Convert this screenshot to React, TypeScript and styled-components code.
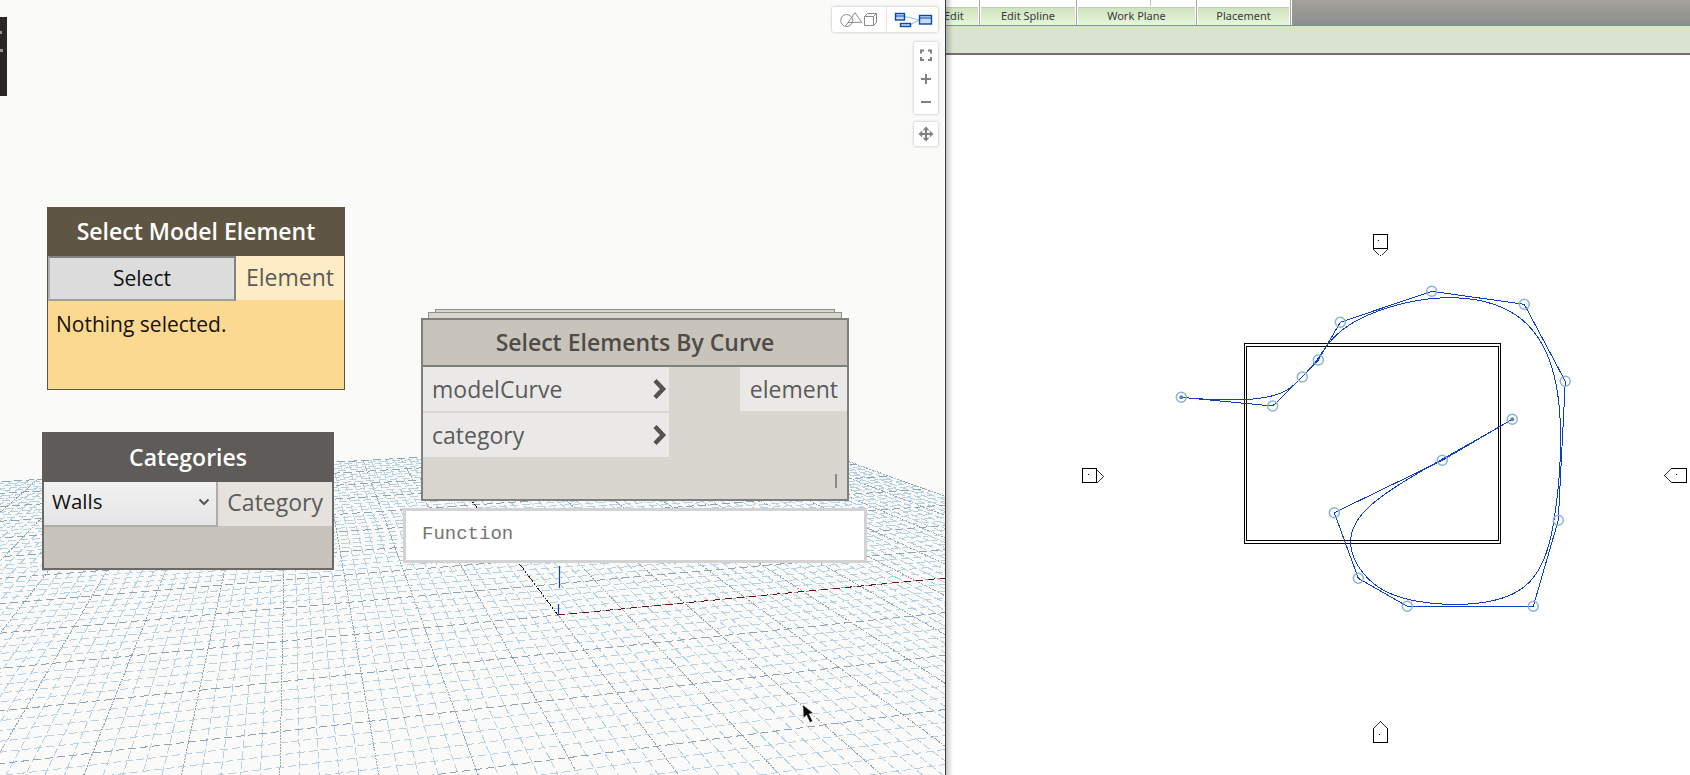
import React from "react";
import styled, { createGlobalStyle } from "styled-components";

const GlobalStyle = createGlobalStyle`
  html, body {
    margin: 0;
    padding: 0;
    width: 1690px;
    height: 775px;
    overflow: hidden;
    background: #fff;
    font-family: "Open Sans", "Liberation Sans", sans-serif;
  }
`;

const Page = styled.div`
  display: flex;
  width: 1690px;
  height: 775px;
  overflow: hidden;
`;

/* ---------- Dynamo side ---------- */

const Workspace = styled.div`
  position: relative;
  flex: 0 0 945px;
  height: 775px;
  background: #fafaf8;
  overflow: hidden;
`;

const FullSvg = styled.svg`
  position: absolute;
  top: 0;
  left: 0;
  display: block;
`;

const LibraryStub = styled.div`
  position: absolute;
  top: 17px;
  left: 0;
  width: 7px;
  height: 79px;
  background: #2b2624;
`;

const StubMark = styled.span<{ $top: number; $w: number }>`
  display: block;
  position: absolute;
  left: 0;
  top: ${(p) => p.$top}px;
  width: ${(p) => p.$w}px;
  height: 3px;
  background: #9a9590;
`;

const NodeBox = styled.div<{
  $x: number;
  $y: number;
  $w: number;
  $h: number;
  $border: string;
  $bg: string;
  $bw: number;
}>`
  position: absolute;
  left: ${(p) => p.$x}px;
  top: ${(p) => p.$y}px;
  width: ${(p) => p.$w}px;
  height: ${(p) => p.$h}px;
  box-sizing: border-box;
  border: ${(p) => p.$bw}px solid ${(p) => p.$border};
  background: ${(p) => p.$bg};
  display: flex;
  flex-direction: column;
`;

const NodeHeader = styled.div<{ $bg: string; $h: number; $bw: number }>`
  flex: 0 0 ${(p) => p.$h}px;
  margin: -${(p) => p.$bw}px -${(p) => p.$bw}px 0;
  background: ${(p) => p.$bg};
  color: #fff;
  font-size: 23px;
  font-weight: 600;
  line-height: ${(p) => p.$h + 2}px;
  text-align: center;
  white-space: nowrap;
`;

const FlatHeader = styled.div`
  flex: 0 0 45px;
  box-sizing: border-box;
  background: #c8c3bb;
  border-bottom: 2px solid #7f7f7b;
  color: #4f4b47;
  font-size: 23px;
  font-weight: 600;
  line-height: 45px;
  text-align: center;
  white-space: nowrap;
`;

const NodeRow = styled.div`
  display: flex;
  justify-content: space-between;
`;

const SelectButton = styled.div`
  box-sizing: border-box;
  width: 188px;
  height: 45px;
  background: #dcdcdc;
  border: 2px solid #828282;
  border-left-color: #b0b0b0;
  border-bottom-color: #a0a0a0;
  color: #111;
  font-size: 21px;
  line-height: 41px;
  text-align: center;
`;

const OutPort = styled.div<{ $bg: string; $w: number; $lh: number; $pad: number }>`
  box-sizing: border-box;
  width: ${(p) => p.$w}px;
  height: 44px;
  background: ${(p) => p.$bg};
  color: #5b5b5b;
  font-size: 23px;
  line-height: ${(p) => p.$lh}px;
  padding-right: ${(p) => p.$pad}px;
  text-align: right;
  white-space: nowrap;
`;

const Message = styled.div`
  padding: 10px 0 0 8px;
  font-size: 21px;
  line-height: 27px;
  color: #1a1208;
`;

const Combo = styled.div`
  position: relative;
  box-sizing: border-box;
  width: 175px;
  height: 45px;
  padding-left: 8px;
  background: linear-gradient(#f2f2f2, #e4e4e4);
  border-right: 2px solid #acaca8;
  border-bottom: 2px solid #acaca8;
  color: #111;
  font-size: 20.5px;
  line-height: 39px;
`;

const ComboArrow = styled.svg`
  position: absolute;
  top: 16px;
  left: 154px;
`;

const Stack = styled.div<{ $x: number; $y: number; $w: number; $h: number }>`
  position: absolute;
  left: ${(p) => p.$x}px;
  top: ${(p) => p.$y}px;
  width: ${(p) => p.$w}px;
  height: ${(p) => p.$h}px;
  box-sizing: border-box;
  border: 1px solid #8f8f8b;
  background: #d9d6d0;
`;

const PortsGrid = styled.div`
  flex: 1;
  position: relative;
  display: flex;
  justify-content: space-between;
`;

const InPorts = styled.div`
  display: flex;
  flex-direction: column;
  gap: 2px;
`;

const InPort = styled.div`
  display: flex;
  align-items: center;
  justify-content: space-between;
  box-sizing: border-box;
  width: 246px;
  height: 44px;
  padding: 0 2px 0 9px;
  background: #eae9e7;
  color: #5b5b5b;
  font-size: 23px;
`;

const ResizeMark = styled.div`
  position: absolute;
  right: 10px;
  bottom: 11px;
  width: 2px;
  height: 14px;
  background: #8a8a88;
`;

const Preview = styled.div`
  position: absolute;
  left: 403px;
  top: 508px;
  box-sizing: border-box;
  width: 464px;
  height: 55px;
  padding-left: 16px;
  background: #fff;
  border: 3px solid #d3d3d3;
  color: #757575;
  font-family: "Liberation Mono", "DejaVu Sans Mono", monospace;
  font-size: 19px;
  line-height: 46px;
`;

const ToolCard = styled.div<{ $x: number; $y: number; $w: number; $h: number }>`
  position: absolute;
  left: ${(p) => p.$x}px;
  top: ${(p) => p.$y}px;
  width: ${(p) => p.$w}px;
  height: ${(p) => p.$h}px;
  background: #fff;
  border-radius: 2px;
  box-shadow: 0 0 3px rgba(0, 0, 0, 0.28);
`;

/* ---------- Revit side ---------- */

const RevitPane = styled.div`
  flex: 1;
  display: flex;
  flex-direction: column;
  position: relative;
  border-left: 1px solid #3a3a3a;
  min-width: 0;
`;

const PaneShadow = styled.div`
  position: absolute;
  top: 0;
  bottom: 0;
  left: 0;
  width: 7px;
  background: linear-gradient(to right, rgba(0, 0, 0, 0.22), rgba(0, 0, 0, 0));
`;

const Ribbon = styled.div`
  display: flex;
  flex: 0 0 25px;
  background: linear-gradient(#a2a29a, #8e8e8b);
  border-bottom: 1px solid #69ad45;
`;

const RibbonPanel = styled.div<{ $w: number }>`
  flex: 0 0 ${(p) => p.$w}px;
  box-sizing: border-box;
  display: flex;
  flex-direction: column;
  justify-content: flex-end;
  background: #fff;
  border-right: 1px solid #fff;
  box-shadow: inset -1px 0 0 #a8a8a8;
  padding-right: 2px;
`;

const RibbonTick = styled.div<{ $left: number }>`
  flex: 0 0 6px;
  width: 1px;
  margin: 0 0 1px ${(p) => p.$left}px;
  background: #c8c8c8;
`;

const RibbonLabel = styled.div`
  height: 18px;
  box-sizing: border-box;
  background: linear-gradient(#cfe2bf, #e8f6da);
  border-top: 1px solid #bcd0ac;
  color: #3a3a3a;
  font-family: "Noto Sans", "Liberation Sans", sans-serif;
  font-size: 11px;
  line-height: 16px;
  text-align: center;
  white-space: nowrap;
  overflow: hidden;
`;

const EditLabel = styled(RibbonLabel)`
  text-indent: -2px;
  text-align: left;
`;

const OptionsBar = styled.div`
  flex: 0 0 27px;
  background: #d9e3d0;
  border-bottom: 2px solid #6f6f6f;
`;

const Viewport = styled.div`
  flex: 1;
  background: #fff;
`;

const CanvasSvg = styled.svg`
  display: block;
`;

/* ---------- drawings ---------- */

const VP_A = { x: 290, y: 260 };
const VP_B = { x: 5000, y: 190 };
const ORIGIN = { x: 558, y: 615 };
const S_STEP = 0.0146;
const T_STEP = 0.09;

const project = (s: number, t: number) => {
  const d = s + t + 1;
  return {
    x: (s * VP_B.x + t * VP_A.x + ORIGIN.x) / d,
    y: (s * VP_B.y + t * VP_A.y + ORIGIN.y) / d,
  };
};

const GroundGrid = () => {
  const sMin = -15;
  const sMax = 10;
  const tMin = -8;
  const tMax = 9;
  const lines: React.ReactElement[] = [];

  for (let i = sMin * 5; i <= sMax * 5; i++) {
    const s = (i / 5) * S_STEP;
    const a = project(s, tMax * T_STEP);
    const b = project(s, tMin * T_STEP);
    const major = i % 5 === 0;
    lines.push(
      <line
        key={`a${i}`}
        x1={a.x}
        y1={a.y}
        x2={b.x}
        y2={b.y}
        stroke={major ? "#8fa4b4" : "#b6d0e4"}
        strokeDasharray={major ? "2 1" : "8 3"}
      />
    );
  }
  for (let j = tMin * 5; j <= tMax * 5; j++) {
    const t = (j / 5) * T_STEP;
    const a = project(sMin * S_STEP, t);
    const b = project(sMax * S_STEP, t);
    const major = j % 5 === 0;
    lines.push(
      <line
        key={`b${j}`}
        x1={a.x}
        y1={a.y}
        x2={b.x}
        y2={b.y}
        stroke={major ? "#8fa4b4" : "#b6d0e4"}
        strokeDasharray="8 4"
      />
    );
  }

  const farAxis = project(0, tMax * T_STEP);
  const redEnd = project(sMax * S_STEP, 0);

  return (
    <FullSvg width={945} height={775} viewBox="0 0 945 775">
      <g shapeRendering="crispEdges" strokeWidth={1}>
        {lines}
        <line
          x1={farAxis.x}
          y1={farAxis.y}
          x2={ORIGIN.x}
          y2={ORIGIN.y}
          stroke="#1c1c1c"
          strokeDasharray="2 1"
        />
        <line
          x1={ORIGIN.x}
          y1={ORIGIN.y}
          x2={redEnd.x}
          y2={redEnd.y}
          stroke="#6b0f0f"
          strokeDasharray="7 5"
        />
      </g>
      <path d="M559.5 566V588M558.5 604V615" stroke="#0b3fc4" strokeWidth={1.2} fill="none" />
      <path
        d="M803 705L803.5 718L806.5 715L810 722.5L812.5 721L809 714L813 713Z"
        fill="#0a0a0a"
        stroke="rgba(255,255,255,0.6)"
        strokeWidth={0.5}
      />
    </FullSvg>
  );
};

const PortChevron = () => (
  <svg width={15} height={22} viewBox="0 0 15 22">
    <path d="M3 2.5L11 11L3 19.5" fill="none" stroke="#55534f" strokeWidth={4.5} />
  </svg>
);

const WorkspaceTools = () => (
  <FullSvg width={945} height={775} viewBox="0 0 945 775">
    <line x1={886.5} y1={7} x2={886.5} y2={32} stroke="#e2e2e2" />
    <g fill="none" stroke="#8a8a8a" strokeWidth={1}>
      <circle cx={846.7} cy={20.5} r={6} />
      <path d="M855 12.7L861.7 22.3L848 22.5M855 12.7L845.5 26" />
      <path d="M864.5 16.5H873.5V25.5H864.5ZM864.5 16.5L867.5 13.5H876.5V22.5L873.5 25.5M873.5 16.5L876.5 13.5" />
    </g>
    <path d="M904.7 16.5L919.3 20M910.7 24.5L919.3 20" stroke="#9cc4e0" strokeWidth={1.2} fill="none" />
    <g fill="#c4dcec" stroke="#0a45b5" strokeWidth={1.4}>
      <rect x={895.5} y={13.5} width={9} height={6.5} />
      <rect x={919.5} y={15.5} width={12} height={8.5} />
      <rect x={900.5} y={23.5} width={10} height={3} />
    </g>
    <path d="M895.5 16H904.5M919.5 18H931.5" stroke="#0a45b5" strokeWidth={1} fill="none" />
    <g fill="none" stroke="#808080" strokeWidth={2}>
      <path d="M921 53.5V50.5H924M928 50.5H931V53.5M931 57V60H928M924 60H921V57" />
      <path d="M921 79H931M926 74V84M921 102H931" />
      <path d="M926 129V139M921 134H931" />
    </g>
    <path
      d="M926 126.5L929.4 130.2H922.6ZM926 141.5L929.4 137.8H922.6ZM918.5 134L922.2 130.6V137.4ZM933.5 134L929.8 130.6V137.4Z"
      fill="#808080"
    />
  </FullSvg>
);

const CONTROL_POINTS = [
  [1181.3, 397.3],
  [1272.7, 406],
  [1302.3, 377],
  [1318.3, 360],
  [1340.3, 322.3],
  [1431.7, 291.3],
  [1524.3, 304.3],
  [1565.3, 381.3],
  [1558.3, 520.3],
  [1533.3, 606.3],
  [1407.3, 606.3],
  [1358.3, 578.3],
  [1334.3, 512.7],
  [1442.3, 460.3],
  [1512.3, 419.3],
];

// clamped cubic b-spline over the control points, sampled to a polyline
const splinePoints = (pts: number[][]) => {
  const n = pts.length - 1;
  const spans = n - 2;
  const knots = [0, 0, 0];
  for (let k = 0; k <= spans; k++) knots.push(k);
  knots.push(spans, spans, spans);

  const basis = (i: number, p: number, u: number): number => {
    if (p === 0) return u >= knots[i] && u < knots[i + 1] ? 1 : 0;
    const a = knots[i + p] - knots[i];
    const b = knots[i + p + 1] - knots[i + 1];
    const left = a > 0 ? ((u - knots[i]) / a) * basis(i, p - 1, u) : 0;
    const right = b > 0 ? ((knots[i + p + 1] - u) / b) * basis(i + 1, p - 1, u) : 0;
    return left + right;
  };

  const out: string[] = [];
  const steps = spans * 24;
  for (let q = 0; q < steps; q++) {
    const u = (q / steps) * spans;
    let x = 0;
    let y = 0;
    pts.forEach((pt, i) => {
      const w = basis(i, 3, u);
      x += pt[0] * w;
      y += pt[1] * w;
    });
    out.push(`${x.toFixed(2)},${y.toFixed(2)}`);
  }
  out.push(pts[n].join(","));
  return out.join(" ");
};

const ElevationTag = ({ body, tip, dot }: { body: string; tip: string; dot: number[] }) => (
  <g shapeRendering="crispEdges">
    <path d={body} fill="#fff" stroke="#000" strokeWidth={1} />
    <path d={tip} fill="#fff" stroke="#000" strokeWidth={0.8} />
    <rect x={dot[0]} y={dot[1]} width={1} height={1} fill="#000" />
  </g>
);

const RevitCanvas = () => (
  <CanvasSvg width={744} height={720} viewBox="946 55 744 720">
    <g fill="none" stroke="#000" strokeWidth={1} shapeRendering="crispEdges">
      <rect x={1244.5} y={343.5} width={256} height={200} />
      <rect x={1246.5} y={346.5} width={252} height={194} />
    </g>
    <g fill="none" stroke="#0b3fc4" strokeWidth={1} shapeRendering="crispEdges">
      <polyline points={CONTROL_POINTS.map((p) => p.join(",")).join(" ")} />
      <polyline points={splinePoints(CONTROL_POINTS)} />
    </g>
    {CONTROL_POINTS.map((p) => (
      <circle key={p.join()} cx={p[0]} cy={p[1]} r={5} fill="none" stroke="#8ab3d8" strokeWidth={1.5} />
    ))}
    <circle cx={1181.3} cy={397.3} r={2} fill="#5c85b5" />
    <circle cx={1512.3} cy={419.3} r={2} fill="#5c85b5" />
    <ElevationTag body="M1373.5 234.5H1387.5V248.5H1373.5Z" tip="M1373.5 248.5L1380.5 256L1387.5 248.5" dot={[1378, 240]} />
    <ElevationTag body="M1373.5 728.5H1387.5V742.5H1373.5Z" tip="M1373.5 728.5L1380.5 721L1387.5 728.5" dot={[1379, 734]} />
    <ElevationTag body="M1082.5 468.5H1096.5V482.5H1082.5Z" tip="M1096.5 468.5L1103.5 475.5L1096.5 482.5" dot={[1088, 474]} />
    <ElevationTag body="M1671.5 468.5H1686.5V482.5H1671.5Z" tip="M1671.5 468.5L1664 475.5L1671.5 482.5" dot={[1676, 474]} />
  </CanvasSvg>
);

const App = () => (
  <Page>
    <GlobalStyle />
    <Workspace>
      <GroundGrid />
      <LibraryStub>
        <StubMark $top={14} $w={2} />
        <StubMark $top={32} $w={3} />
      </LibraryStub>

      <NodeBox $x={47} $y={207} $w={298} $h={183} $border="#5e5542" $bg="#fbd991" $bw={1}>
        <NodeHeader $bg="#5e5542" $h={47} $bw={1}>
          Select Model Element
        </NodeHeader>
        <NodeRow>
          <SelectButton>Select</SelectButton>
          <OutPort $bg="#feecc6" $w={108} $lh={43} $pad={10}>Element</OutPort>
        </NodeRow>
        <Message>Nothing selected.</Message>
      </NodeBox>

      <NodeBox $x={42} $y={432} $w={292} $h={138} $border="#6c6a66" $bg="#c8c3bc" $bw={2}>
        <NodeHeader $bg="#5e5b58" $h={48} $bw={2}>
          Categories
        </NodeHeader>
        <NodeRow>
          <Combo>
            Walls
            <ComboArrow width={12} height={8} viewBox="0 0 12 8">
              <path d="M1.5 1.5L6 6L10.5 1.5" fill="none" stroke="#555" strokeWidth={2} />
            </ComboArrow>
          </Combo>
          <OutPort $bg="#e5e1dc" $w={115} $lh={41} $pad={9}>Category</OutPort>
        </NodeRow>
      </NodeBox>

      <Stack $x={435} $y={309} $w={400} $h={6} />
      <Stack $x={428} $y={312} $w={414} $h={8} />
      <NodeBox $x={421} $y={318} $w={428} $h={183} $border="#7f7f7b" $bg="#d9d6d0" $bw={2}>
        <FlatHeader>Select Elements By Curve</FlatHeader>
        <PortsGrid>
          <InPorts>
            <InPort>
              modelCurve
              <PortChevron />
            </InPort>
            <InPort>
              category
              <PortChevron />
            </InPort>
          </InPorts>
          <OutPort $bg="#eae9e7" $w={107} $lh={44} $pad={9}>element</OutPort>
          <ResizeMark />
        </PortsGrid>
      </NodeBox>

      <Preview>Function</Preview>

      <ToolCard $x={832} $y={7} $w={106} $h={25} />
      <ToolCard $x={914} $y={42} $w={24} $h={72} />
      <ToolCard $x={914} $y={122} $w={24} $h={24} />
      <WorkspaceTools />
    </Workspace>

    <RevitPane>
      <Ribbon>
        <RibbonPanel $w={35}>
          <EditLabel>Edit</EditLabel>
        </RibbonPanel>
        <RibbonPanel $w={97}>
          <RibbonLabel>Edit Spline</RibbonLabel>
        </RibbonPanel>
        <RibbonPanel $w={120}>
          <RibbonTick $left={72} />
          <RibbonLabel>Work Plane</RibbonLabel>
        </RibbonPanel>
        <RibbonPanel $w={94}>
          <RibbonLabel>Placement</RibbonLabel>
        </RibbonPanel>
      </Ribbon>
      <OptionsBar />
      <Viewport>
        <RevitCanvas />
      </Viewport>
      <PaneShadow />
    </RevitPane>
  </Page>
);

export default App;
